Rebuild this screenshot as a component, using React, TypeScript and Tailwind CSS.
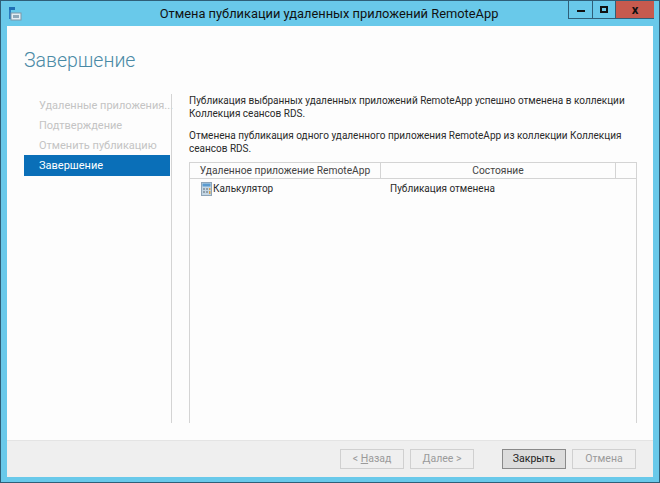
const font = "font-['Roboto','Noto_Sans',sans-serif]";

function WindowIcon() {
  return (
    <svg width="14" height="15" viewBox="0 0 14 15">
      <rect x="1" y="1" width="6" height="3" fill="#1f6fb5" />
      <rect x="1" y="4" width="2" height="9" fill="#2a7cc0" />
      <rect x="3" y="7" width="10" height="7" fill="#e4eef4" stroke="#7f97a8" strokeWidth="1" />
      <rect x="5" y="9" width="6" height="3" fill="#8fa9ba" />
    </svg>
  );
}

function CalcIcon() {
  return (
    <svg width="11" height="14" viewBox="0 0 11 14">
      <rect x="0.5" y="0.5" width="10" height="13" fill="#c4d6e4" stroke="#8fa5b8" />
      <rect x="1.5" y="1.5" width="8" height="3" fill="#5b9bd0" />
      <rect x="2" y="6" width="2" height="2" fill="#8f9fac" />
      <rect x="5" y="6" width="2" height="2" fill="#8f9fac" />
      <rect x="8" y="6" width="1.5" height="2" fill="#d8a24a" />
      <rect x="2" y="9" width="2" height="2" fill="#8f9fac" />
      <rect x="5" y="9" width="2" height="2" fill="#8f9fac" />
      <rect x="8" y="9" width="1.5" height="3" fill="#d8a24a" />
    </svg>
  );
}

function Btn({ children, primary }: { children: React.ReactNode; primary?: boolean }) {
  return (
    <div
      className={`flex h-[20px] w-[64px] items-center justify-center border text-[10.5px] ${
        primary ? "border-[#8a8a8a] bg-[#dcdcdc] text-[#222]" : "border-[#d0d0d0] bg-[#efefef] text-[#9a9a9a]"
      }`}
    >
      {children}
    </div>
  );
}

export default function App() {
  return (
    <div className={`flex h-[483px] w-[660px] flex-col border border-[#2f5f78] bg-[#69c9ea] ${font}`}>
      {/* title bar */}
      <div className="flex h-[25px] shrink-0 items-start">
        <div className="ml-[7px] mt-[5px]">
          <WindowIcon />
        </div>
        <div className="flex-1 pl-[68px] pt-[3px] text-center text-[12.85px] leading-[20px] text-[#111]">
          Отмена публикации удаленных приложений RemoteApp
        </div>
        <div className="mr-[5px] flex h-[18px] items-stretch border-b border-l border-[#2f5f78]">
          <div className="flex w-[24px] items-center justify-center border-r border-[#2f5f78]">
            <div className="mt-[3px] h-[2px] w-[8px] bg-[#111]" />
          </div>
          <div className="flex w-[22px] items-center justify-center">
            <div className="h-[7px] w-[8px] border-2 border-[#111]" />
          </div>
          <div className="flex w-[39px] items-center justify-center border-l border-[#2f5f78] bg-[#c75a4e] text-[13px] font-bold leading-none text-[#111]">
            x
          </div>
        </div>
      </div>

      {/* client area */}
      <div className="mx-[6px] flex min-h-0 flex-1 flex-col bg-[#fdfdfd]">
        <div className="flex min-h-0 flex-1 flex-col">
          <h1 className="pl-[17px] pt-[19px] text-[19.5px] font-light leading-[32px] text-[#4a8aa6]">Завершение</h1>
          <div className="mt-[17px] flex min-h-0 flex-1 pb-[17px] pl-[17px]">
            {/* steps */}
            <div className="flex w-[146px] flex-col pt-[2px] text-[11px] text-[#c4c4c4]">
              <div className="flex h-[20px] items-center whitespace-nowrap pl-[15px]">Удаленные приложения...</div>
              <div className="flex h-[20px] items-center whitespace-nowrap pl-[15px]">Подтверждение</div>
              <div className="flex h-[19px] items-center whitespace-nowrap pl-[15px] pt-[2px]">Отменить публикацию</div>
              <div className="flex h-[21px] items-center bg-[#0a6fb8] pl-[15px] pt-[1px] text-white">Завершение</div>
            </div>
            <div className="ml-[1px] w-px bg-[#d4d4d4]" />
            {/* content */}
            <div className="ml-[17px] flex w-[448px] min-h-0 flex-col text-[10px] leading-[13px] text-[#2a2a2a]">
              <p className="whitespace-nowrap">
                Публикация выбранных удаленных приложений RemoteApp успешно отменена в коллекции
                <br />
                Коллекция сеансов RDS.
              </p>
              <p className="mt-[9px] whitespace-nowrap">
                Отменена публикация одного удаленного приложения RemoteApp из коллекции Коллекция
                <br />
                сеансов RDS.
              </p>
              <div className="mt-[7px] flex min-h-0 flex-1 flex-col border-x border-[#d4d4d4]">
                <div className="flex h-[17px] shrink-0 border-y border-[#d4d4d4] text-[10.25px] text-[#444]">
                  <div className="flex w-[191px] items-center justify-center whitespace-nowrap border-r border-[#d4d4d4]">
                    Удаленное приложение RemoteApp
                  </div>
                  <div className="flex w-[235px] items-center justify-center border-r border-[#d4d4d4]">Состояние</div>
                </div>
                <div className="flex h-[19px] items-center">
                  <div className="flex w-[191px] items-center gap-px pl-[11px]">
                    <CalcIcon />
                    Калькулятор
                  </div>
                  <div className="pl-[9px]">Публикация отменена</div>
                </div>
              </div>
            </div>
          </div>
        </div>
        {/* footer */}
        <div className="flex h-[37px] shrink-0 items-start border-t border-[#e4e4e4] bg-[#efefef] pr-[17px] pt-[8px]">
          <div className="ml-auto flex gap-[6px]">
            <Btn>
              <span>
                &lt; <span className="underline">Н</span>азад
              </span>
            </Btn>
            <Btn>
              <span>
                <span className="underline">Д</span>алее &gt;
              </span>
            </Btn>
          </div>
          <div className="ml-[28px] flex gap-[6px]">
            <Btn primary>Закрыть</Btn>
            <Btn>Отмена</Btn>
          </div>
        </div>
      </div>
      <div className="h-[5px] shrink-0" />
    </div>
  );
}
